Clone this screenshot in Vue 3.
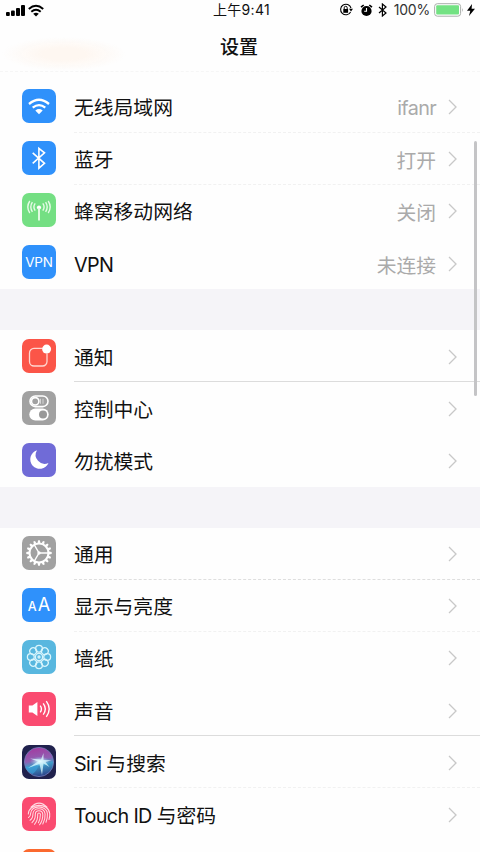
<script setup>
const groups = [
  [
    { icon: 'wifi', label: '无线局域网', value: 'ifanr', line: 'faint' },
    { icon: 'bluetooth', label: '蓝牙', value: '打开', line: 'faint' },
    { icon: 'cellular', label: '蜂窝移动网络', value: '关闭', line: 'none' },
    { icon: 'vpn', latin: 'VPN', label: '', value: '未连接', line: 'none' },
  ],
  [
    { icon: 'notify', label: '通知', line: 'strong' },
    { icon: 'control', label: '控制中心', line: 'none' },
    { icon: 'moon', label: '勿扰模式', line: 'none' },
  ],
  [
    { icon: 'general', label: '通用', line: 'medium' },
    { icon: 'display', label: '显示与亮度', line: 'faint' },
    { icon: 'wallpaper', label: '墙纸', line: 'none' },
    { icon: 'sound', label: '声音', line: 'strong' },
    { icon: 'siri', latin: 'Siri ', label: '与搜索', line: 'faint' },
    { icon: 'touch', latin: 'Touch ID ', label: '与密码', line: 'none' },
    { icon: 'sos', label: '', line: 'none' },
  ],
]
const petals = [0, 45, 90, 135, 180, 225, 270, 315]
const teeth = Array.from({ length: 16 }, (_, i) => i * 22.5)
</script>

<template>
  <div class="phone">
    <header class="top">
      <div class="status">
        <div class="side left">
          <svg class="signal" width="20" height="13" viewBox="0 0 20 13">
            <rect x="0" y="8" width="3.8" height="4" rx="1" /><rect x="5" y="6.5" width="3.8" height="5.5" rx="1" />
            <rect x="10" y="4" width="4" height="8" rx="1" /><rect x="15" y="1" width="4" height="11" rx="1" />
          </svg>
          <svg width="16" height="13" viewBox="0 0 16 13" fill="none" stroke="#000" stroke-width="2">
            <path d="M.8 5Q8-1.4 15.2 5M3.3 7.8q4.7-4 9.4 0" /><path d="M5.2 9.7q2.8-2 5.6 0L8 12.5z" fill="#000" stroke="none" />
          </svg>
        </div>
        <span class="clock">上午9:41</span>
        <div class="side right">
          <svg width="14" height="14" viewBox="0 0 14 14" fill="none" stroke="#000">
            <path d="M11.6 9A5.3 5.3 0 1 1 12 5" stroke-width="1.1" /><path d="M10 5.8h4l-2 2.8z" fill="#000" stroke="none" />
            <rect x="4.3" y="6" width="4.8" height="3.8" fill="#000" stroke="none" /><path d="M5.2 6V4.8a1.5 1.5 0 0 1 3 0V6" />
          </svg>
          <svg class="alarm" width="13" height="13" viewBox="0 0 13 13">
            <circle cx="6.5" cy="7" r="5.1" /><path d="M1 3.2 3.7 1M12 3.2 9.3 1" stroke="#000" stroke-width="1.6" />
            <path d="M6.5 4v3.2H4.2" stroke="#fff" stroke-width="1.1" fill="none" />
          </svg>
          <svg class="bt" width="9" height="14" viewBox="0 0 9 14"><path d="m1 4 7 6-3.6 3V1L8 4l-7 6" fill="none" stroke="#000" stroke-width="1.2" /></svg>
          <span class="percent">100%</span>
          <svg class="battery" width="30" height="14" viewBox="0 0 30 14">
            <rect x=".6" y=".7" width="26" height="12.5" rx="2.8" fill="#fff" stroke="#a9aeaa" />
            <rect x="2.2" y="2.3" width="22.8" height="9.3" rx="1" fill="#73e283" /><path d="M28 5q1.8 2 0 4z" fill="#a9aeaa" />
          </svg>
          <svg class="bolt" width="8" height="12" viewBox="0 0 8 12"><path d="M5 0 0 6.7h3.3L2 12l6-7.2H4.6z" /></svg>
        </div>
      </div>
      <h1>设置</h1>
    </header>

    <main>
      <section v-for="(rows, g) in groups" :key="g" class="group">
        <div v-for="row in rows" :key="row.icon" class="row">
          <div class="tile" :class="row.icon">
            <svg viewBox="0 0 34 34" width="34" height="34" fill="none" stroke="#fff">
              <g v-if="row.icon === 'wifi'" stroke-width="2.3">
                <path d="M7 15q10-8.4 20 0M10.7 18.6q6.3-5 12.6 0" /><path d="M13.3 21.4q3.7-2.7 7.4 0L17 25.2z" fill="#fff" stroke="none" />
              </g>
              <path v-else-if="row.icon === 'bluetooth'" d="m10.7 11.8 11.8 10.5-5.6 4.9V7.4l5.6 4.5-11.8 10.4" stroke-width="1.6" />
              <g v-else-if="row.icon === 'cellular'" stroke-width="1.4" stroke="#e6fbe6">
                <circle cx="17" cy="14.5" r="2.1" fill="#fff" stroke="none" /><path d="M17 15v12.5" stroke-width="1.9" />
                <path d="M13.2 10.4q-2.6 3.6 0 7.2M10.4 9.2q-3.2 4.8 0 9.6M7.8 8q-4 6 0 12M20.8 10.4q2.6 3.6 0 7.2M23.6 9.2q3.2 4.8 0 9.6M26.2 8q4 6 0 12" />
              </g>
              <g v-else-if="row.icon === 'notify'">
                <path d="M20.5 9.4H12A4.5 4.5 0 0 0 7.5 14v8.5A4.5 4.5 0 0 0 12 27h8.5a4.5 4.5 0 0 0 4.5-4.5v-8" stroke="#ffd6cf" stroke-width="1.3" />
                <circle cx="24.6" cy="10.1" r="4.5" fill="#fff" stroke="none" />
              </g>
              <g v-else-if="row.icon === 'control'">
                <rect x="8" y="5" width="18" height="10.6" rx="5.3" stroke-width="1.6" /><circle cx="13.2" cy="10.3" r="3.7" stroke-width="1.6" />
                <path d="M18.5 7.8v5M21 7.8v5" stroke="#d5d5d5" />
                <rect x="7.3" y="17.6" width="19.4" height="12" rx="6" fill="#fff" stroke="none" /><circle cx="21" cy="23.5" r="4" fill="#999" stroke="none" />
              </g>
              <path v-else-if="row.icon === 'moon'" d="M15 7.2A9.5 9.5 0 1 0 26.5 20 9 9 0 0 1 15 7.2z" fill="#fff" stroke="none" />
              <g v-else-if="row.icon === 'general'">
                <path v-for="a in teeth" :key="a" d="M15.6 7 16.1 4.3h1.8L18.4 7z" fill="#fff" stroke="none" :transform="`rotate(${a} 17 17)`" />
                <circle cx="17" cy="17" r="9.5" stroke-width="2.1" />
                <path d="M17 17h9M17 17l-4.6-8M17 17l-4.6 8" stroke-width="1.5" /><circle cx="17" cy="17" r="1.7" fill="#fff" stroke="none" />
              </g>
              <g v-else-if="row.icon === 'wallpaper'" stroke="#d9f5fc" stroke-width="1.3">
                <circle v-for="a in petals" :key="a" cx="17" cy="8.8" r="3.4" :transform="`rotate(${a} 17 17)`" /><circle cx="17" cy="17" r="3.6" />
                <circle cx="17" cy="17" r="1" />
              </g>
              <g v-else-if="row.icon === 'sound'" stroke-width="1.4">
                <path d="M6.8 13.5h3.6l5-3.6v14.2l-5-3.6H6.8z" fill="#fff" stroke="none" />
                <path d="M18.2 13.6q2.5 3.4 0 6.8M21.2 11.4q4.2 5.6 0 11.2M24.3 9.2q5.8 7.8 0 15.6" />
              </g>
              <g v-else-if="row.icon === 'siri'">
                <defs>
                  <linearGradient id="orb" x1=".4" y1="0" x2=".6" y2="1"><stop stop-color="#a33ba0" /><stop offset=".42" stop-color="#8f60b3" /><stop offset=".6" stop-color="#3f9cc8" /><stop offset="1" stop-color="#2b3f86" /></linearGradient>
                  <radialGradient id="flare"><stop stop-color="#fff" /><stop offset=".4" stop-color="#c9f5ff" stop-opacity=".6" /><stop offset="1" stop-color="#8edcf0" stop-opacity="0" /></radialGradient>
                </defs>
                <circle cx="17" cy="17" r="14.6" fill="url(#orb)" stroke="#737dbd" stroke-width=".8" />
                <path d="M3.5 22q8 0 14-6-1 9-7 13Q5 27 3.5 22z" fill="#3aa4dd" opacity=".6" stroke="none" />
                <ellipse cx="18" cy="16.5" rx="10" ry="5" fill="url(#flare)" stroke="none" />
                <path d="m21.5 8-2.5 6.5L8 13.5l8 3-10 6.5 11.5-4 2.5 11 1.5-11.5 6 3.5-4-5 6-1.8-8-.3z" fill="#dcfbff" opacity=".75" stroke="none" />
              </g>
              <g v-else-if="row.icon === 'touch'" stroke-width="1.05" stroke="#ffdbe3" stroke-linecap="round">
                <path d="M9 10.2q8-8.2 16 0M6.3 17C6.5 6.2 26.5 5 27.7 16.5q.3 3-.7 6" />
                <path d="M6.5 20.5q2-.8 2.1-4C9 7.5 24.6 7.8 25.4 16.5q.3 4-1.4 8.7" />
                <path d="M8 23.3q3-2 2.9-6.3c.2-7 11.4-7 12.2 0q.3 5.4-2.3 10" />
                <path d="M10 25.6q3.5-3.2 3.3-8.4c.1-4.6 7-4.6 7.5 0q.2 6-3.2 10.6" />
                <path d="M12.5 27.3q3.5-4 3.2-10c0-1.8 2.5-1.8 2.7 0q0 5-2 8.4" />
              </g>
            </svg>
            <span v-if="row.icon === 'vpn'" class="vpn-text">VPN</span>
            <span v-if="row.icon === 'display'" class="aa"><small>A</small>A</span>
          </div>
          <div class="body" :class="row.line">
            <span class="label"><span v-if="row.latin" class="latin">{{ row.latin }}</span>{{ row.label }}</span>
            <span v-if="row.value" class="value" :class="{ latin: row.icon === 'wifi' }">{{ row.value }}</span>
            <svg class="chevron" width="10" height="16" viewBox="0 0 10 16"><path d="m1 1 7 7-7 7" /></svg>
          </div>
        </div>
      </section>
    </main>
    <div class="scrollbar"></div>
  </div>
</template>

<style>
body { margin: 0; background: #fefefe; }
</style>

<style scoped>
.phone { position: relative; width: 480px; height: 852px; overflow: hidden; background: #fefefe; color: #111; font-family: Inter, "Noto Sans CJK SC", sans-serif; }
.top { box-sizing: border-box; height: 72px; border-bottom: 1px dashed #f6f6f6; background: radial-gradient(ellipse 62px 17px at 64px 54px, #fef7f1 0 35%, transparent 100%); }
.status { height: 20px; display: grid; grid-template-columns: 1fr auto 1fr; align-items: center; padding: 0 5px 0 6px; }
.side { display: flex; align-items: center; }
.left { gap: 2px; }
.right { justify-content: flex-end; }
.clock { font-size: 14px; line-height: 20px; letter-spacing: .3px; padding-left: 2px; }
.alarm { margin-left: 7px; }
.bt { margin-left: 5px; }
.percent { margin-left: 7px; font-size: 14px; line-height: 20px; letter-spacing: -.2px; color: #333; }
.battery { margin-left: 4px; }
.bolt { margin-left: 3px; }
h1 { margin: 0; text-align: center; font-size: 19px; line-height: 56px; height: 52px; font-weight: 500; padding-right: 2px; }
main { padding-top: 8.6px; }
.group + .group { border-top: 41px solid #f5f4f8; }
.row { height: 52.15px; display: flex; align-items: center; padding-left: 22px; }
.tile { width: 34px; height: 34px; margin-top: -1.4px; flex: none; border-radius: 7px; overflow: hidden; display: grid; place-items: center; color: #fff; }
.tile > * { grid-area: 1 / 1; }
.wifi, .bluetooth, .vpn, .display { background: #2f91fb; }
.cellular { background: #74df83; }
.notify { background: #fb5548; }
.control, .general { background: #a1a1a1; }
.moon { background: #706bd7; }
.wallpaper { background: #58b7df; }
.sound, .touch { background: #fa4b70; }
.siri { background: #20214d; }
.sos { background: #fb692f; }
.vpn-text { font-size: 13.5px; line-height: 34px; letter-spacing: -.2px; }
.aa { font-size: 18px; line-height: 34px; }
.aa small { font-size: 12.5px; margin-right: 1px; font-weight: 500; }
.body { flex: 1; box-sizing: border-box; height: 100%; margin-left: 18px; padding-right: 22px; display: flex; align-items: center; border-bottom: 1px solid transparent; }
.strong { border-bottom-color: #dcdcdc; }
.medium { border-bottom: 1px dashed #dedede; }
.faint { border-bottom: 1px dashed #f1f1f1; }
.label { font-size: 19.8px; line-height: 48px; padding-top: 4px; white-space: pre; }
.latin { letter-spacing: -.65px; }
.value { margin-left: auto; margin-right: 12px; padding-top: 3px; font-size: 19.8px; color: #aaa; }
.chevron { margin-left: auto; margin-top: 2px; fill: none; stroke: #c8c8c8; stroke-width: 1.3; }
.value + .chevron { margin-left: 0; }
.scrollbar { position: absolute; top: 141px; right: 3px; width: 3px; height: 255px; border-radius: 2px; background: #c4c4c6; }
</style>
